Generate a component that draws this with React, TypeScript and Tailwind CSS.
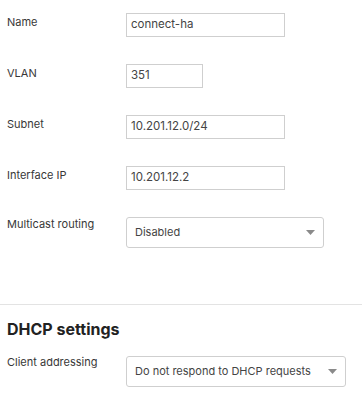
const font = { fontFamily: "Inter, 'Noto Sans', sans-serif" };

function Caret() {
  return (
    <svg width="9" height="5" viewBox="0 0 9 5" className="shrink-0">
      <path d="M0 0h9L4.5 5z" fill="#8a8a8a" />
    </svg>
  );
}

function Row({
  label,
  labelClass = "pt-[1px]",
  children,
}: {
  label: string;
  labelClass?: string;
  children: React.ReactNode;
}) {
  return (
    <div className="flex items-start">
      <div className={`w-[119px] shrink-0 text-[11px] leading-4 text-[#383838] ${labelClass}`}>{label}</div>
      {children}
    </div>
  );
}

function TextInput({ value, width }: { value: string; width: string }) {
  return (
    <div
      className={`${width} h-[24px] border border-[#cfcfcf] bg-white pl-[4px] flex items-center text-[11.5px] text-[#444]`}
    >
      {value}
    </div>
  );
}

function Select({ value, width }: { value: string; width: string }) {
  return (
    <div
      className={`${width} h-[31px] rounded-[3px] border border-[#cfcfcf] bg-white pl-[8px] pr-[8px] flex items-center justify-between text-[11px] text-[#444]`}
    >
      <span>{value}</span>
      <Caret />
    </div>
  );
}

export default function App() {
  return (
    <div className="w-[362px] h-[400px] bg-white overflow-hidden" style={font}>
      <div className="pl-[7px] pt-[13px] flex flex-col gap-[27px]">
        <Row label="Name">
          <TextInput value="connect-ha" width="w-[159px]" />
        </Row>
        <Row label="VLAN">
          <TextInput value="351" width="w-[77px]" />
        </Row>
        <Row label="Subnet">
          <TextInput value="10.201.12.0/24" width="w-[159px]" />
        </Row>
        <Row label="Interface IP">
          <TextInput value="10.201.12.2" width="w-[159px]" />
        </Row>
        <Row label="Multicast routing" labelClass="-mt-[1px]">
          <Select value="Disabled" width="w-[198px]" />
        </Row>
      </div>
      <div className="mt-[56px] h-px bg-[#e3e3e3]" />
      <div className="pl-[7px] pt-[12px]">
        <h2 className="text-[16px] leading-6 font-bold text-[#222]">DHCP settings</h2>
        <div className="mt-[15px]">
          <Row label="Client addressing" labelClass="-mt-[2px]">
            <Select value="Do not respond to DHCP requests" width="w-[220px]" />
          </Row>
        </div>
      </div>
    </div>
  );
}
